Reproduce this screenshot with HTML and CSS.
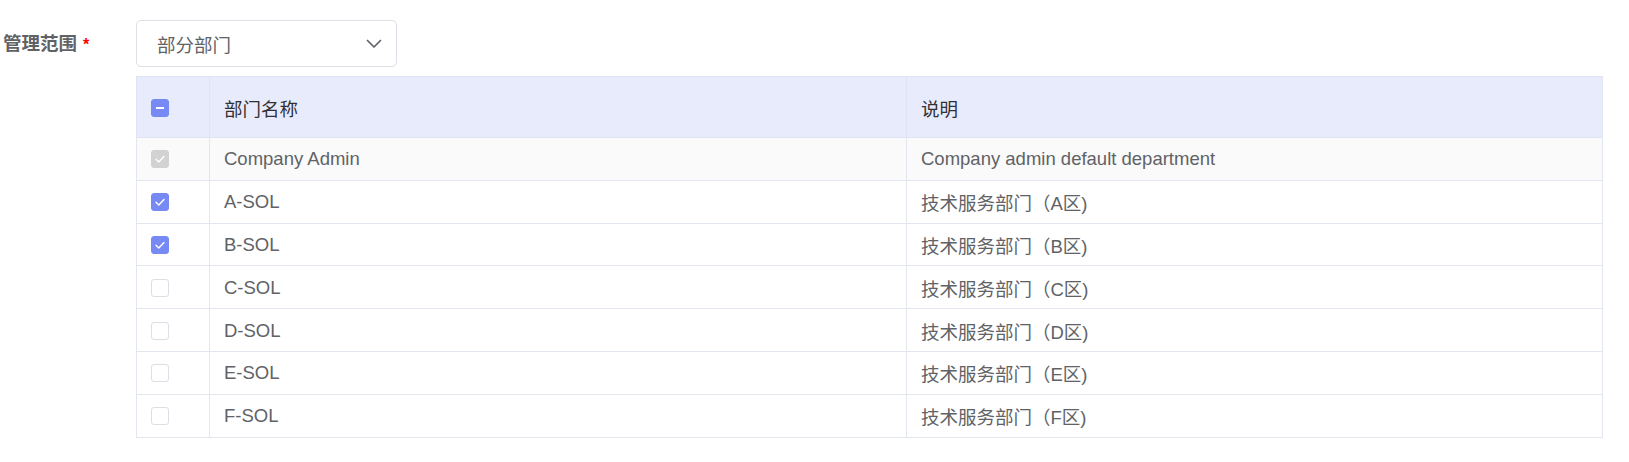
FILE: index.html
```html
<!DOCTYPE html>
<html lang="zh-CN">
<head>
<meta charset="utf-8">
<title>管理范围</title>
<link rel="stylesheet" href="styles.css">
</head>
<body>
<div class="form-item">
  <label class="form-label">管理范围<span class="req">*</span></label>
  <div class="form-content">
    <div class="select">
      <span class="select-value">部分部门</span>
      <svg class="chevron" width="16" height="10" viewBox="0 0 16 10"><path d="M1.5 1.5 L8 8 L14.5 1.5" fill="none" stroke="#606266" stroke-width="1.7" stroke-linecap="round" stroke-linejoin="round"/></svg>
    </div>
    <table class="dept-table">
      <colgroup><col class="c-check"><col class="c-name"><col class="c-desc"></colgroup>
      <thead>
        <tr>
          <th><span class="cb cb-indeterminate"></span></th>
          <th>部门名称</th>
          <th>说明</th>
        </tr>
      </thead>
      <tbody>
        <tr class="disabled">
          <td><span class="cb cb-disabled"><svg viewBox="0 0 18 18"><path d="M5 9.2 L7.8 12 L13 6.5" fill="none" stroke="#fff" stroke-width="1.4" stroke-linecap="round" stroke-linejoin="round"/></svg></span></td>
          <td>Company Admin</td>
          <td>Company admin default department</td>
        </tr>
        <tr>
          <td><span class="cb cb-checked"><svg viewBox="0 0 18 18"><path d="M5 9.2 L7.8 12 L13 6.5" fill="none" stroke="#fff" stroke-width="1.4" stroke-linecap="round" stroke-linejoin="round"/></svg></span></td>
          <td>A-SOL</td>
          <td>技术服务部门（A区)</td>
        </tr>
        <tr>
          <td><span class="cb cb-checked"><svg viewBox="0 0 18 18"><path d="M5 9.2 L7.8 12 L13 6.5" fill="none" stroke="#fff" stroke-width="1.4" stroke-linecap="round" stroke-linejoin="round"/></svg></span></td>
          <td>B-SOL</td>
          <td>技术服务部门（B区)</td>
        </tr>
        <tr>
          <td><span class="cb"></span></td>
          <td>C-SOL</td>
          <td>技术服务部门（C区)</td>
        </tr>
        <tr>
          <td><span class="cb"></span></td>
          <td>D-SOL</td>
          <td>技术服务部门（D区)</td>
        </tr>
        <tr>
          <td><span class="cb"></span></td>
          <td>E-SOL</td>
          <td>技术服务部门（E区)</td>
        </tr>
        <tr>
          <td><span class="cb"></span></td>
          <td>F-SOL</td>
          <td>技术服务部门（F区)</td>
        </tr>
      </tbody>
    </table>
  </div>
</div>
</body>
</html>
```
FILE: styles.css
```css
html, body {
  margin: 0;
  padding: 0;
  background: #fff;
}
body {
  font-family: "Liberation Sans", "Noto Sans CJK SC", sans-serif;
  color: #606266;
}
.form-item {
  display: flex;
  padding-top: 20px;
}
.form-label {
  width: 133px;
  padding-left: 3px;
  font-size: 18.5px;
  font-weight: bold;
  color: #606266;
  line-height: 47px;
  height: 47px;
  flex: none;
}
.req {
  color: #f00;
  margin-left: 6px;
  font-size: 16px;
}
.form-content {
  display: flex;
  flex-direction: column;
  gap: 9px;
}
.select {
  width: 261px;
  height: 47px;
  box-sizing: border-box;
  border: 1px solid #dcdfe6;
  border-radius: 5px;
  display: flex;
  align-items: center;
  justify-content: space-between;
  padding: 0 14px 0 20px;
}
.select-value {
  font-size: 18.5px;
  color: #606266;
}
.chevron {
  display: block;
}
.dept-table {
  border-collapse: collapse;
  width: 1467px;
  table-layout: fixed;
  font-size: 18.5px;
}
.c-check { width: 73px; }
.c-name { width: 697px; }
.dept-table th,
.dept-table td {
  border: 1px solid #e2e6ee;
  text-align: left;
  padding: 1px 0 0 14px;
  white-space: nowrap;
}
.dept-table th {
  height: 59px;
  background: #e8ebfc;
  color: #303133;
  font-weight: normal;
  border-color: #e0e4f2;
}
.dept-table td {
  height: 40.8px;
  color: #606266;
}
.dept-table tr.disabled td {
  background: #fafafa;
}
.cb {
  display: block;
  width: 18px;
  height: 18px;
  box-sizing: border-box;
  border: 1px solid #dcdfe6;
  border-radius: 3px;
  background: #fff;
  position: relative;
}
.cb svg {
  display: block;
  width: 18px;
  height: 18px;
  margin: -1px;
}
.cb-checked {
  background: #7689f5;
  border-color: #7689f5;
}
.cb-disabled {
  background: #d2d2d2;
  border-color: #d2d2d2;
}
.cb-indeterminate {
  background: #7689f5;
  border-color: #7689f5;
}
.cb-indeterminate::after {
  content: "";
  position: absolute;
  left: 4px;
  right: 4px;
  top: 7px;
  height: 2px;
  background: #fff;
}
```
